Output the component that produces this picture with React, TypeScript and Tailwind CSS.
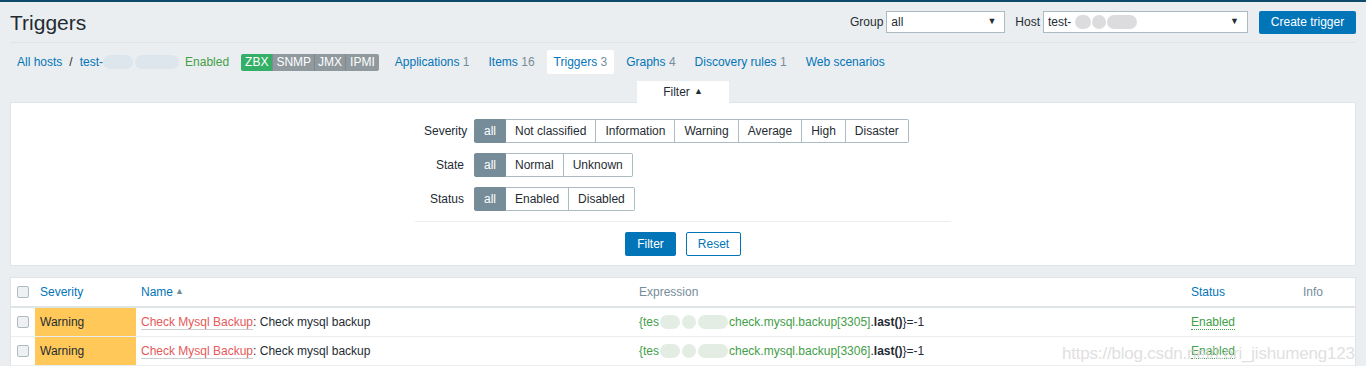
const sevOpts = ['all', 'Not classified', 'Information', 'Warning', 'Average', 'High', 'Disaster']
const stateOpts = ['all', 'Normal', 'Unknown']
const statusOpts = ['all', 'Enabled', 'Disabled']

function Segmented({ items }: { items: string[] }) {
  return (
    <div className="flex h-[24px]">
      {items.map((it, i) => (
        <span
          key={it}
          className={
            i === 0
              ? 'flex items-center px-[9px] bg-[#768d99] text-white border border-[#768d99] rounded-l-[2px]'
              : 'flex items-center px-[9px] bg-white text-[#1f2c33] border border-l-0 border-[#acbbc2] last:rounded-r-[2px]'
          }
        >
          {it}
        </span>
      ))}
    </div>
  )
}

function Blur({ w, tone }: { w: number; tone: 'gray' | 'green' | 'blue' }) {
  const cls =
    tone === 'green'
      ? 'bg-[#e3ede3]'
      : tone === 'blue'
        ? 'bg-[#dde6ec]'
        : 'bg-[#dcdcdf]'
  return <span className={`inline-block h-[14px] rounded-[7px] ${cls}`} style={{ width: w }} />
}

function Checkbox() {
  return (
    <span className="block w-[12px] h-[12px] rounded-[2px] border border-[#acbbc2] bg-[#eef0f1]" />
  )
}

function Row({ port }: { port: string }) {
  return (
    <div className="flex h-[29px] border-b border-[#ebeef0]">
      <div className="w-[24px] flex items-center pl-[6px]">
        <Checkbox />
      </div>
      <div className="w-[101px] bg-[#ffc859] flex items-center pl-[5px] text-[#1f2c33]">Warning</div>
      <div className="w-[498px] flex items-center pl-[5px]">
        <span className="text-[#e45959] border-b border-[#c8ced2] leading-[14px]">Check Mysql Backup</span>
        <span>: Check mysql backup</span>
      </div>
      <div className="w-[552px] flex items-center pl-[5px]">
        <span className="text-[#429e47]">{'{tes'}</span>
        <span className="flex items-center gap-[2px] mx-[1px]">
          <Blur w={20} tone="green" />
          <Blur w={14} tone="green" />
          <Blur w={30} tone="green" />
        </span>
        <span className="text-[#429e47]">check.mysql.backup[{port}]</span>
        <span>.</span>
        <span className="font-bold">last()</span>
        <span>{'}=-1'}</span>
      </div>
      <div className="w-[112px] flex items-center pl-[5px]">
        <span className="text-[#429e47] border-b border-dotted border-[#429e47] leading-[14px]">Enabled</span>
      </div>
      <div className="flex-1" />
    </div>
  )
}

export default function App() {
  return (
    <div className="relative min-h-[366px] bg-[#ebeef0] border-t-2 border-[#0b4a6b] text-[12px] text-[#1f2c33] font-['Liberation_Sans',Arial,sans-serif] overflow-hidden">
      <div className="absolute -top-[2px] left-[169px] w-[31px] h-[2px] bg-[#1a8fd6]" />

      {/* header */}
      <div className="mx-[10px] h-[41px] flex items-center justify-between border-b border-[#dfe4e7]">
        <h1 className="text-[21px] text-[#1f2c33] leading-none mt-[1px]">Triggers</h1>
        <div className="flex items-center">
          <span className="mr-[3px]">Group</span>
          <div className="w-[119px] h-[22px] bg-white border border-[#acbbc2] flex items-center justify-between pl-[4px] pr-[8px]">
            <span>all</span>
            <span className="text-[9px]">▼</span>
          </div>
          <span className="ml-[10px] mr-[3px]">Host</span>
          <div className="w-[205px] h-[22px] bg-white border border-[#acbbc2] flex items-center justify-between pl-[4px] pr-[8px]">
            <span className="flex items-center">
              test-
              <span className="flex items-center gap-[1px] ml-[4px]">
                <Blur w={16} tone="gray" />
                <Blur w={14} tone="gray" />
                <Blur w={30} tone="gray" />
              </span>
            </span>
            <span className="text-[9px]">▼</span>
          </div>
          <button className="ml-[11px] w-[97px] h-[23px] bg-[#0275b8] text-white rounded-[2px]">Create trigger</button>
        </div>
      </div>

      {/* nav */}
      <div className="h-[38px] flex items-center pl-[17px] pr-[10px]">
        <span className="text-[#0275b8]">All hosts</span>
        <span className="mx-[7px]">/</span>
        <span className="text-[#0275b8]">test-</span>
        <span className="flex items-center gap-[2px] mr-[6px]">
          <Blur w={30} tone="blue" />
          <Blur w={44} tone="blue" />
        </span>
        <span className="text-[#429e47]">Enabled</span>
        <span className="ml-[12px] flex h-[17px] text-white rounded-[2px] overflow-hidden">
          <span className="px-[4px] flex items-center bg-[#34af67]">ZBX</span>
          <span className="px-[3px] flex items-center bg-[#8f999e] border-l border-[#7f898e]">SNMP</span>
          <span className="px-[3px] flex items-center bg-[#8f999e] border-l border-[#7f898e]">JMX</span>
          <span className="px-[4px] flex items-center bg-[#8f999e] border-l border-[#7f898e]">IPMI</span>
        </span>
        <div className="ml-[9px] flex items-center gap-[5px]">
          <span className="px-[7px] py-[3px]"><span className="text-[#0275b8]">Applications</span> <span className="text-[#768d99]">1</span></span>
          <span className="px-[7px] py-[3px]"><span className="text-[#0275b8]">Items</span> <span className="text-[#768d99]">16</span></span>
          <span className="px-[7px] py-[3px] bg-white rounded-[2px]"><span className="text-[#0275b8]">Triggers</span> <span className="text-[#768d99]">3</span></span>
          <span className="px-[7px] py-[3px]"><span className="text-[#0275b8]">Graphs</span> <span className="text-[#768d99]">4</span></span>
          <span className="px-[7px] py-[3px]"><span className="text-[#0275b8]">Discovery rules</span> <span className="text-[#768d99]">1</span></span>
          <span className="px-[7px] py-[3px] text-[#0275b8]">Web scenarios</span>
        </div>
      </div>

      {/* filter */}
      <div className="mx-[10px]">
        <div className="flex justify-center">
          <div className="w-[92px] h-[22px] bg-white flex items-center justify-center gap-[4px] -mb-px relative">
            <span>Filter</span>
            <span className="text-[9px]">▲</span>
          </div>
        </div>
        <div className="h-[164px] bg-white border border-[#dfe4e7] pt-[16px]">
          <div className="w-[536px] mx-auto">
            <div className="flex flex-col gap-[10px] pl-[9px]">
              <div className="flex items-center">
                <span className="w-[40px] text-right mr-[10px]">Severity</span>
                <Segmented items={sevOpts} />
              </div>
              <div className="flex items-center">
                <span className="w-[40px] text-right mr-[10px]">State</span>
                <Segmented items={stateOpts} />
              </div>
              <div className="flex items-center">
                <span className="w-[40px] text-right mr-[10px]">Status</span>
                <Segmented items={statusOpts} />
              </div>
            </div>
            <div className="mt-[10px] border-t border-[#ebeef0] pt-[10px] flex justify-center gap-[10px]">
              <button className="w-[51px] h-[24px] bg-[#0275b8] text-white rounded-[2px]">Filter</button>
              <button className="w-[55px] h-[24px] bg-white text-[#0275b8] border border-[#0275b8] rounded-[2px]">Reset</button>
            </div>
          </div>
        </div>
      </div>

      {/* table */}
      <div className="mx-[10px] mt-[11px] bg-white border border-[#dfe4e7]">
        <div className="flex h-[30px] border-b-2 border-[#dfe4e7]">
          <div className="w-[24px] flex items-center pl-[6px]">
            <Checkbox />
          </div>
          <div className="w-[101px] flex items-center pl-[5px] text-[#0275b8]">Severity</div>
          <div className="w-[498px] flex items-center pl-[5px]">
            <span className="text-[#0275b8]">Name</span>
            <span className="text-[#768d99] text-[9px] ml-[2px]">▲</span>
          </div>
          <div className="w-[552px] flex items-center pl-[5px] text-[#768d99]">Expression</div>
          <div className="w-[112px] flex items-center pl-[5px] text-[#0275b8]">Status</div>
          <div className="flex-1 flex items-center pl-[5px] text-[#768d99]">Info</div>
        </div>
        <Row port="3305" />
        <Row port="3306" />
      </div>

      <div className="absolute left-[1062px] top-[339px] text-[17px] text-[#d6d6d6] opacity-75 whitespace-nowrap tracking-[-0.2px]">
        https://blog.csdn.net/Lori_jishumeng123
      </div>
    </div>
  )
}
